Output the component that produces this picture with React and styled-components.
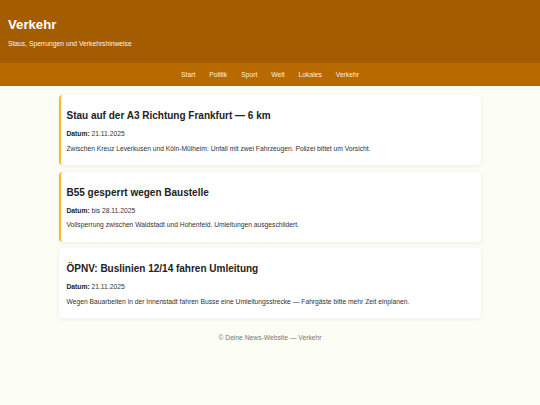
import React from "react";
import styled, { createGlobalStyle } from "styled-components";

const Global = createGlobalStyle`
  html, body { margin: 0; padding: 0; }
  body {
    background: #fcfdf4;
    font-family: "Liberation Sans", Arial, sans-serif;
    color: #333;
    font-size: 6.72px;
  }
`;

const Header = styled.header`
  background: #a35d00;
  color: #fff;
  padding: 16.5px 8px 15px;
`;

const Title = styled.h1`
  margin: 0 0 8.5px;
  font-size: 13.2px;
  line-height: 15px;
  font-weight: 700;
`;

const Subtitle = styled.p`
  margin: 0;
  font-size: 6.72px;
  line-height: 8px;
  color: #fff3e0;
`;

const Nav = styled.nav`
  background: #b86a00;
  height: 23px;
  display: flex;
  justify-content: center;
  align-items: center;
  gap: 14px;
`;

const NavLink = styled.a`
  color: #fdf0dc;
  text-decoration: none;
  font-size: 6.72px;
  line-height: 8px;
`;

const Main = styled.main`
  width: 422px;
  margin: 9px auto 0;
  display: flex;
  flex-direction: column;
  gap: 6.5px;
`;

const Card = styled.article`
  background: #fff;
  border-radius: 4px;
  border-left: 2.5px solid ${(p) => (p.$alert ? "#f6b92b" : "#fff")};
  padding: 15px 6px 12.5px 5.5px;
  box-shadow: 0 1px 4px rgba(0, 0, 0, 0.07);
`;

const CardTitle = styled.h2`
  margin: 0 0 8px;
  font-size: 10px;
  line-height: 12px;
  font-weight: 700;
  color: #222;
`;

const Meta = styled.p`
  margin: 0 0 6.5px;
  line-height: 8px;
  color: #333;
  strong { color: #222; }
`;

const Body = styled.p`
  margin: 0;
  line-height: 8px;
  color: #333;
`;

const Footer = styled.footer`
  text-align: center;
  color: #777;
  line-height: 8px;
  padding: 16px 0;
`;

const items = [
  {
    title: "Stau auf der A3 Richtung Frankfurt — 6 km",
    date: "21.11.2025",
    text: "Zwischen Kreuz Leverkusen und Köln-Mülheim: Unfall mit zwei Fahrzeugen. Polizei bittet um Vorsicht.",
    alert: true,
  },
  {
    title: "B55 gesperrt wegen Baustelle",
    date: "bis 28.11.2025",
    text: "Vollsperrung zwischen Waldstadt und Hohenfeld. Umleitungen ausgeschildert.",
    alert: true,
  },
  {
    title: "ÖPNV: Buslinien 12/14 fahren Umleitung",
    date: "21.11.2025",
    text: "Wegen Bauarbeiten in der Innenstadt fahren Busse eine Umleitungsstrecke — Fahrgäste bitte mehr Zeit einplanen.",
    alert: false,
  },
];

export default function App() {
  return (
    <>
      <Global />
      <Header>
        <Title>Verkehr</Title>
        <Subtitle>Staus, Sperrungen und Verkehrshinweise</Subtitle>
      </Header>
      <Nav>
        {["Start", "Politik", "Sport", "Welt", "Lokales", "Verkehr"].map((l) => (
          <NavLink key={l} href="#">{l}</NavLink>
        ))}
      </Nav>
      <Main>
        {items.map((it) => (
          <Card key={it.title} $alert={it.alert}>
            <CardTitle>{it.title}</CardTitle>
            <Meta><strong>Datum:</strong> {it.date}</Meta>
            <Body>{it.text}</Body>
          </Card>
        ))}
      </Main>
      <Footer>© Deine News-Website — Verkehr</Footer>
    </>
  );
}
